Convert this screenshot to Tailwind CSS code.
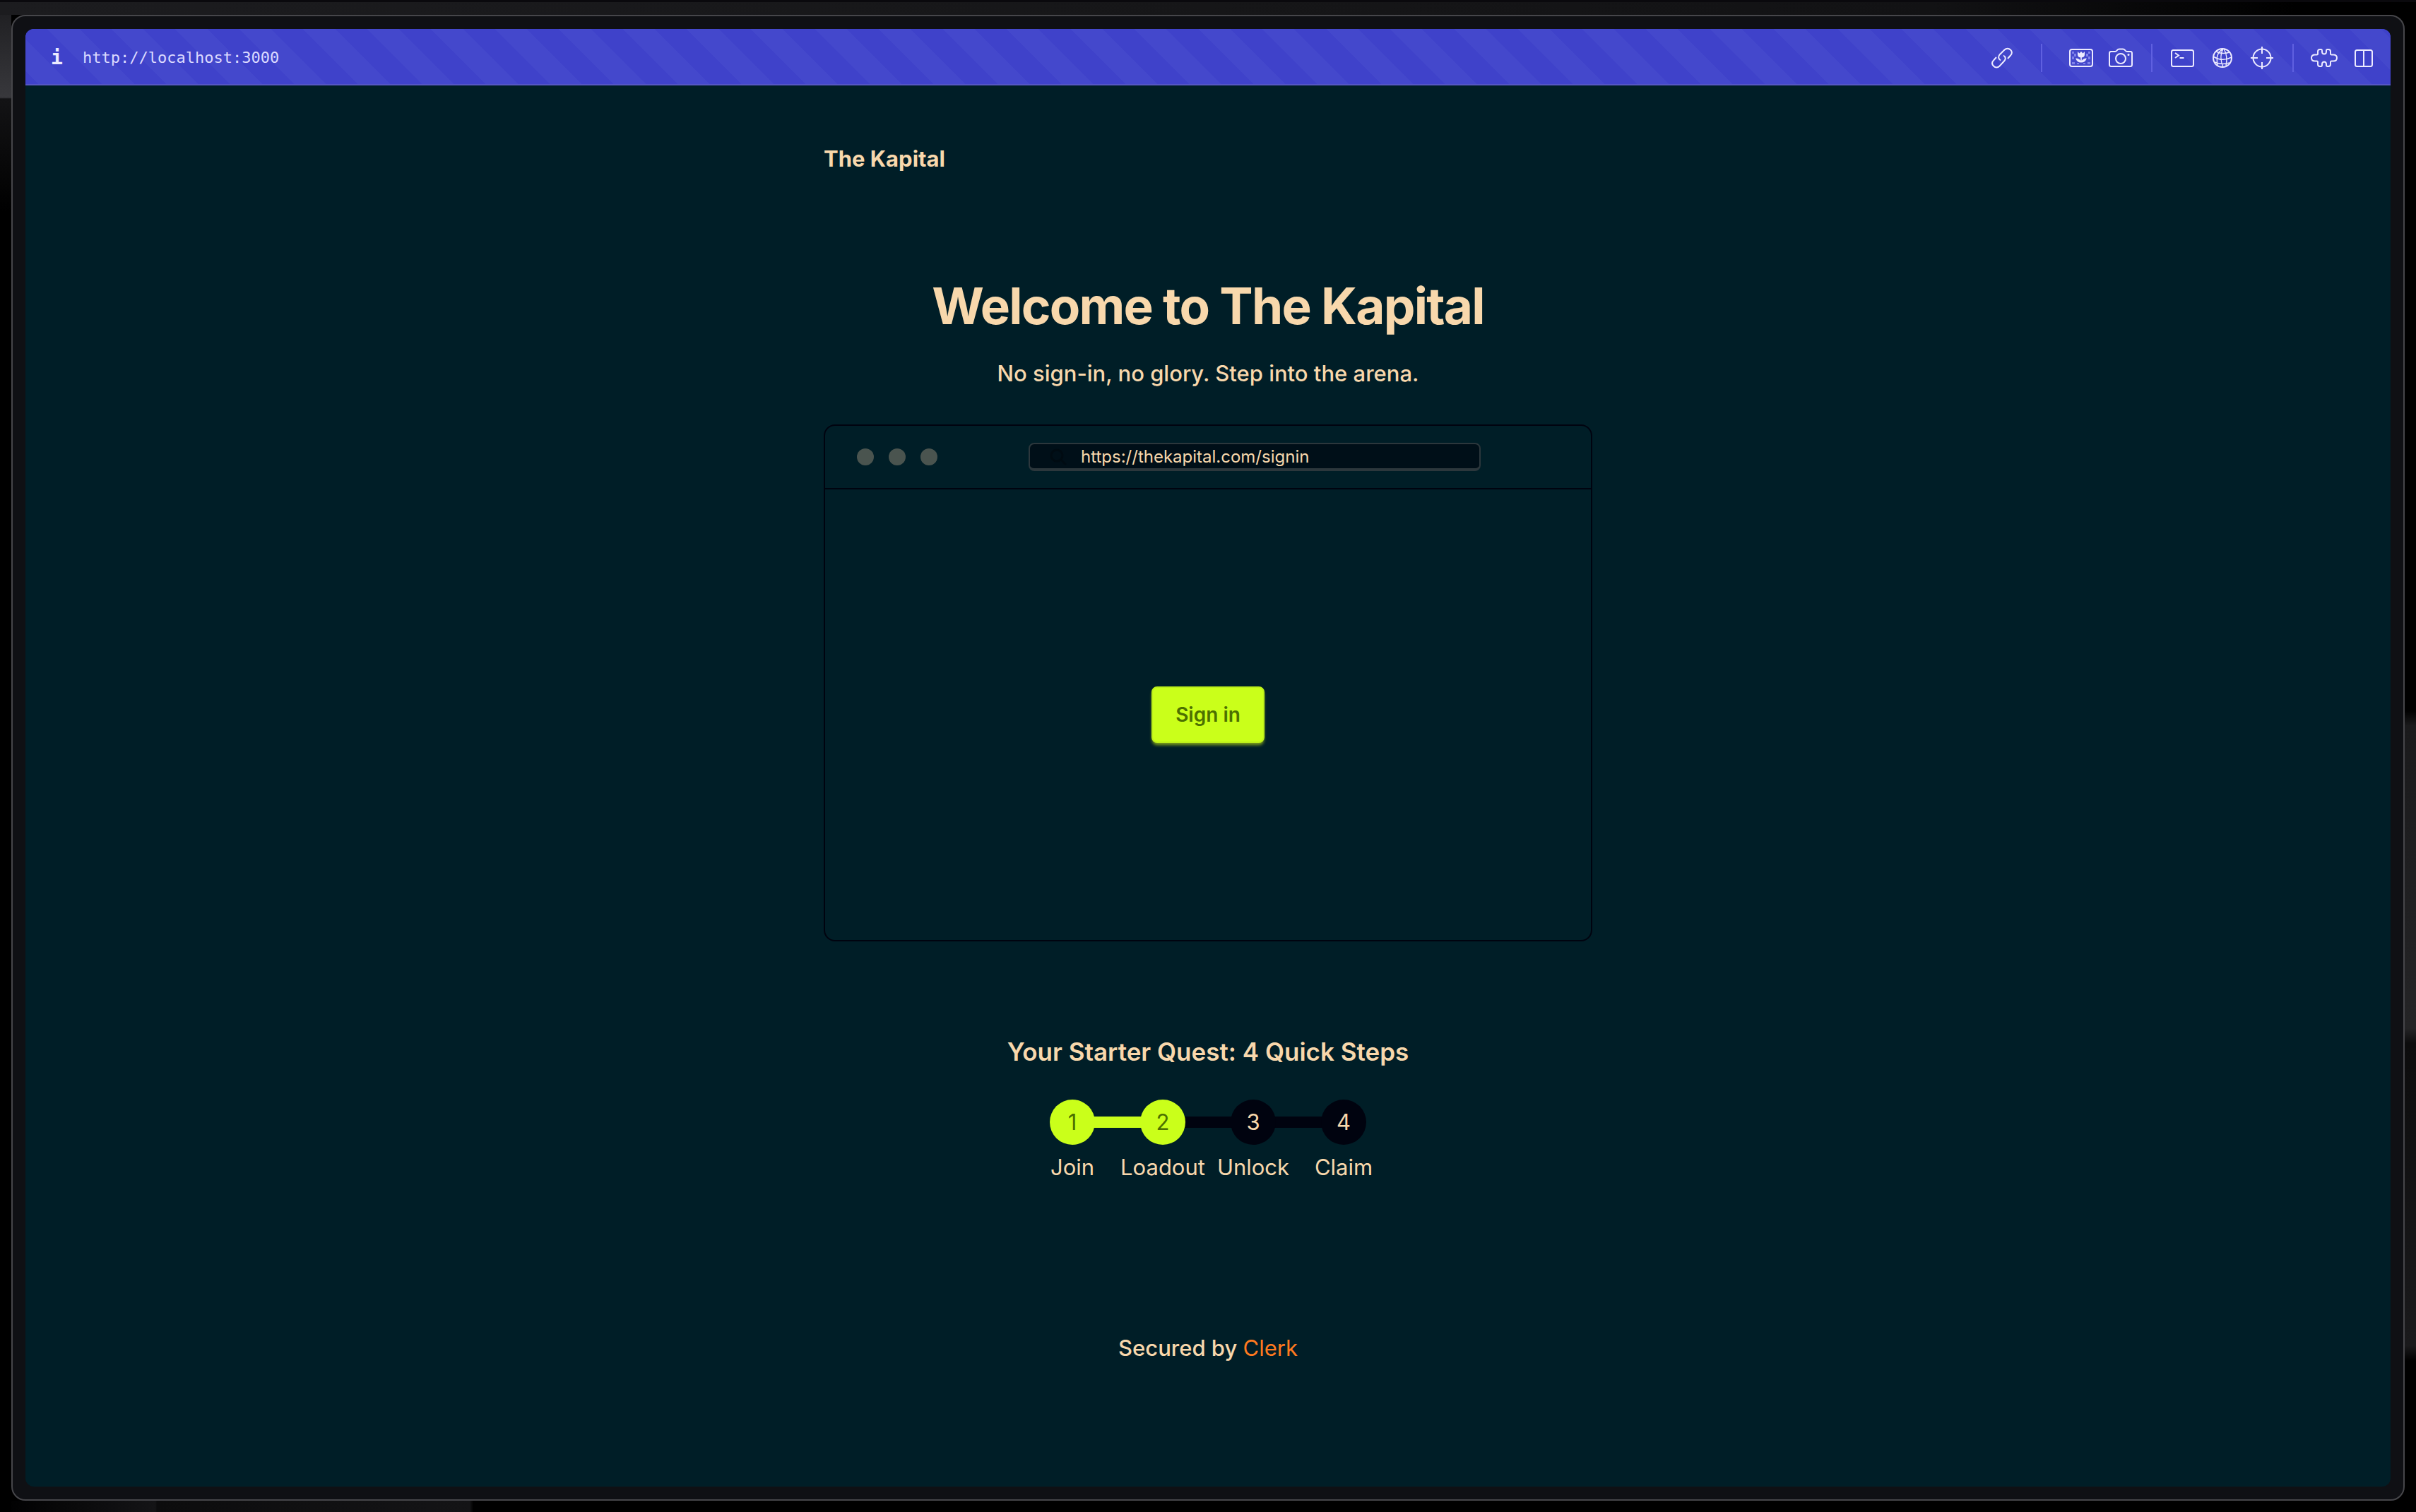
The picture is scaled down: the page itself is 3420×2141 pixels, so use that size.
<!DOCTYPE html>
<html lang="en">
<head>
<meta charset="utf-8">
<title>The Kapital</title>
<script src="https://cdn.jsdelivr.net/npm/@tailwindcss/browser@4"></script>
</head>
<body class="flex min-h-screen flex-col bg-black bg-[linear-gradient(180deg,#0a090d_0_3px,transparent_3px),linear-gradient(90deg,#1c1c1f_0,#161618_50%,#121214_80%,#000_95%),linear-gradient(180deg,#1c1c1f_0,#38383c_138px,#131315_140px,#000_300px),linear-gradient(180deg,#000_47%,#1a1a1c_48%,#242426_68%,#0c0c0d_69%,#1a1a1c_89%,#000_90%),linear-gradient(90deg,#000_0,#141416_220px,#0c0c0d_222px,#141416_665px,#000_670px)] bg-[length:100%_21px,100%_21px,16px_100%,16px_100%,100%_16px] bg-[position:0_0,0_0,0_0,100%_0,0_100%] bg-no-repeat px-4 pt-[21px] pb-4 font-['Inter',sans-serif] text-[31px] leading-[48px] text-[#f8d8ac]">
<div class="flex grow flex-col rounded-[20px] border-2 border-[#46464a] bg-[#0f1014] p-[18px]">
  <div class="flex grow flex-col overflow-hidden rounded-xl bg-[#001e27]">
    <header class="flex h-20 items-center border-b-2 border-[#5656c4] bg-[#4044cc] bg-[repeating-linear-gradient(45deg,#3f42ca_0_13px,#4448cc_13px_45px,#3f42ca_45px_64px)] pt-1 pr-2.5 pl-9 text-[#eceaff]">
      <button aria-label="Site information" class="w-4 text-center font-['DejaVu_Sans_Mono',monospace] text-[28px] font-bold leading-8">i</button>
      <input aria-label="Address" value="http://localhost:3000" class="ml-[29px] min-w-0 grow bg-transparent font-['DejaVu_Sans_Mono',monospace] text-[22px] leading-8 text-[#dcdaff]">
      <nav class="flex items-center" aria-label="Page tools">
        <button class="flex w-14 justify-center" aria-label="Copy link"><svg class="size-8" viewBox="0 0 32 32" fill="none" stroke="currentColor" stroke-width="2"><path d="M14 19.500C10.500 17.500 10.500 14 12.500 11.500L19.500 4.500C22 2 25.500 2 28 4.500C30.500 7 30.500 10 28 12.500L24 17"/><path d="M18 12.500C21.500 14.500 21.500 18 19 20.500L12.500 27.500C10 30 6.500 30 4 27.500C1.500 25 1.500 22 4 19.500L8 15"/></svg></button>
        <span class="flex w-14 justify-center"><span class="h-10 w-0.5 bg-[#5f60e0]"></span></span>
        <button class="flex w-14 justify-center" aria-label="Save image"><svg class="h-7 w-9" viewBox="0 0 36 28" fill="none"><g fill="#8082ea"><path d="M5 5h3v3H5zM8 8h3v4H8zM5 12h3v4H5zM5 20h4v3H5zM28 5h3v3h-3zM25 8h3v4h-3zM28 12h3v4h-3zM27 20h4v3h-4zM12 21h3v2h-3zM21 21h3v2h-3z"/></g><rect x="2" y="2" width="32" height="24" rx="3" stroke="currentColor" stroke-width="2"/><path fill="currentColor" d="M13 5l2.500 2.500L18 5l2.500 2.500L23 5v4q0 4-4.200 4.500v4.500q2-3.500 7-3.500-1.500 6-7.800 6t-7.800-6q5 0 7 3.500v-4.500Q13 13 13 9z"/></svg></button>
        <button class="flex w-14 justify-center" aria-label="Screenshot"><svg class="h-7 w-9" viewBox="0 0 36 28" fill="none" stroke="currentColor" stroke-width="2"><path d="M4 5h6c1.500 0 2-.5 3-2s1.500-1.500 3-1.500h5c1.500 0 2 0 3 1.500s1.500 2 3 2h5q2 0 2 2.500v16q0 2.500-2.500 2.500h-27Q2 26 2 23.500V7.500Q2 5 4 5z"/><circle cx="18" cy="15" r="7"/><circle cx="29" cy="9.500" r="1.500" fill="currentColor" stroke="none"/></svg></button>
        <span class="flex w-8 justify-center"><span class="h-10 w-0.5 bg-[#5f60e0]"></span></span>
        <button class="flex w-14 justify-center" aria-label="Console"><svg class="h-7 w-9" viewBox="0 0 36 28" fill="none" stroke="currentColor" stroke-width="2"><rect x="2" y="3" width="31" height="23" rx="2.500"/><path d="M7 7l5 3.500L7 14M13.500 14h6"/></svg></button>
        <button class="flex w-14 justify-center" aria-label="Network"><svg class="size-7" viewBox="0 0 28 28" fill="none" stroke="currentColor" stroke-width="2"><circle cx="14" cy="14" r="13"/><path stroke-width="1.500" d="M15 1C7 6 5 12 7 24M15 1C11 8 11 18 15 27M16 1c4 7 5 15 3 24M5 5c6 3 13 3 19 1M1 12c8 5 17 6 26 1M3 20c7 3 14 3 21 1"/></svg></button>
        <button class="flex w-14 justify-center" aria-label="Inspect"><svg class="h-9 w-8" viewBox="0 0 32 36" fill="none" stroke="currentColor" stroke-width="2"><circle cx="16" cy="18" r="12.500"/><path d="M16 2v10M16 24v10M0 18h10M22 18h10"/></svg></button>
        <span class="flex w-8 justify-center"><span class="h-10 w-0.5 bg-[#5f60e0]"></span></span>
        <button class="flex w-14 justify-center" aria-label="Extensions"><svg class="h-7 w-10" viewBox="0 0 40 28" fill="none" stroke="currentColor" stroke-width="2" stroke-linejoin="round"><path d="M11 8V5q0-3 3-3h1.500q1.500 0 1.500 2v1q0 3.500 3 3.500t3-3.500V4q0-2 1.500-2H26q3 0 3 3v3q0 1.500 1.500 1.500H33q5 0 5 4.500t-5 4.500h-2.500Q29 18.500 29 20v3q0 3-3 3h-1.500q-1.500 0-1.500-2v-1q0-3.500-3-3.500t-3 3.500v1q0 2-1.500 2H14q-3 0-3-3v-3q0-1.500-1.500-1.500H7q-5 0-5-4.500t5-4.500h2.500Q11 9.500 11 8z"/></svg></button>
        <button class="flex w-14 justify-center" aria-label="Split view"><svg class="size-7" viewBox="0 0 28 28" fill="none" stroke="currentColor" stroke-width="2"><rect x="2" y="3" width="24" height="23" rx="2.500"/><path d="M14 3v23"/></svg></button>
      </nav>
    </header>
    <main class="mx-auto flex w-full max-w-[1088px] grow flex-col items-center pt-20">
      <a href="#" class="self-start font-bold">The Kapital</a>
      <h1 class="mt-36 text-[71px] font-bold leading-[80px] tracking-tight">Welcome to The Kapital</h1>
      <p class="mt-8 font-medium">No sign-in, no glory. Step into the arena.</p>
      <section class="mt-12 flex h-[732px] w-full flex-col rounded-2xl border-2 border-[#00030f]">
        <div class="flex h-[90px] items-center border-b-2 border-[#00030f] pl-[45px]">
          <div class="flex gap-[21px]"><span class="size-6 rounded-full bg-[#4a544f]"></span><span class="size-6 rounded-full bg-[#4a544f]"></span><span class="size-6 rounded-full bg-[#4a544f]"></span></div>
          <label class="ml-[129px] flex h-10 w-[640px] items-center rounded-lg border-2 border-b-4 border-[#2c373c] bg-[#000f18] pt-0.5 pl-7">
            <svg class="size-6 text-[#000b12]" viewBox="0 0 24 24" fill="none" stroke="currentColor" stroke-width="3"><circle cx="10" cy="10" r="8"/><path d="M16 16l7 7"/></svg>
            <input aria-label="Sign-in address" readonly value="https://thekapital.com/signin" class="ml-5 min-w-0 grow bg-transparent text-[24px] leading-8">
          </label>
        </div>
        <div class="flex grow items-center justify-center">
          <button class="h-20 w-40 rounded-lg border-2 border-[#bdf01a] bg-[#caff1a] text-[28px] font-semibold leading-8 text-[#4c7000] shadow-[0_4px_4px_-1px_#7fa01c]">Sign in</button>
        </div>
      </section>
      <h2 class="mt-[132px] text-[35px] font-semibold">Your Starter Quest: 4 Quick Steps</h2>
      <ol class="isolate mt-11 grid grid-cols-4 text-center">
        <li class="flex w-32 flex-col items-center"><span class="z-10 flex size-16 items-center justify-center rounded-full bg-[#caff1a] text-[#4c7000]">1</span><span class="mt-2">Join</span></li>
        <li class="relative flex w-32 flex-col items-center before:absolute before:top-6 before:right-16 before:h-4 before:w-32 before:bg-[#caff1a]"><span class="z-10 flex size-16 items-center justify-center rounded-full bg-[#caff1a] text-[#4c7000]">2</span><span class="mt-2">Loadout</span></li>
        <li class="relative flex w-32 flex-col items-center before:absolute before:top-6 before:right-16 before:h-4 before:w-32 before:bg-[#00030f]"><span class="z-10 flex size-16 items-center justify-center rounded-full bg-[#00030f]">3</span><span class="mt-2">Unlock</span></li>
        <li class="relative flex w-32 flex-col items-center before:absolute before:top-6 before:right-16 before:h-4 before:w-32 before:bg-[#00030f]"><span class="z-10 flex size-16 items-center justify-center rounded-full bg-[#00030f]">4</span><span class="mt-2">Claim</span></li>
      </ol>
      <p class="mt-52 font-medium">Secured by <a href="#" class="font-normal text-[#ff7a1f]">Clerk</a></p>
    </main>
  </div>
</div>
</body>
</html>
